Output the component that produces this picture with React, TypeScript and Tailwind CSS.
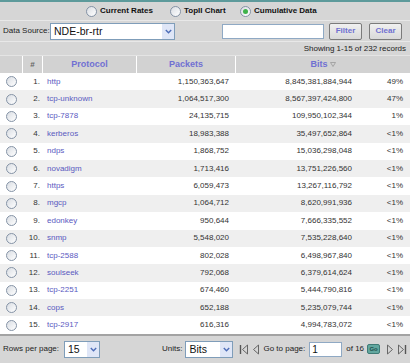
import React from 'react';

const rows = [
  { proto: 'http', packets: '1,150,363,647', bits: '8,845,381,884,944', pct: '49%' },
  { proto: 'tcp-unknown', packets: '1,064,517,300', bits: '8,567,397,424,800', pct: '47%' },
  { proto: 'tcp-7878', packets: '24,135,715', bits: '109,950,102,344', pct: '1%' },
  { proto: 'kerberos', packets: '18,983,388', bits: '35,497,652,864', pct: '<1%' },
  { proto: 'ndps', packets: '1,868,752', bits: '15,036,298,048', pct: '<1%' },
  { proto: 'novadigm', packets: '1,713,416', bits: '13,751,226,560', pct: '<1%' },
  { proto: 'https', packets: '6,059,473', bits: '13,267,116,792', pct: '<1%' },
  { proto: 'mgcp', packets: '1,064,712', bits: '8,620,991,936', pct: '<1%' },
  { proto: 'edonkey', packets: '950,644', bits: '7,666,335,552', pct: '<1%' },
  { proto: 'snmp', packets: '5,548,020', bits: '7,535,228,640', pct: '<1%' },
  { proto: 'tcp-2588', packets: '802,028', bits: '6,498,967,840', pct: '<1%' },
  { proto: 'soulseek', packets: '792,068', bits: '6,379,614,624', pct: '<1%' },
  { proto: 'tcp-2251', packets: '674,460', bits: '5,444,790,816', pct: '<1%' },
  { proto: 'cops', packets: '652,188', bits: '5,235,079,744', pct: '<1%' },
  { proto: 'tcp-2917', packets: '616,316', bits: '4,994,783,072', pct: '<1%' },
];

const Radio = ({ checked = false }: { checked?: boolean }) => (
  <span className="flex items-center justify-center w-[11px] h-[11px] rounded-full border border-[#8593a6] bg-gradient-to-br from-[#d9dde3] to-white shrink-0">
    {checked && <span className="w-[5px] h-[5px] rounded-full bg-[#3fb24a]" />}
  </span>
);

const Chevron = () => (
  <span className="flex items-center justify-center w-[12px] h-full bg-[#dfe6f7]">
    <svg width="7" height="5" viewBox="0 0 7 5">
      <path d="M0.8 1 L3.5 3.7 L6.2 1" fill="none" stroke="#4d6db8" strokeWidth="1.4" />
    </svg>
  </span>
);

const Select = ({ value, className }: { value: string; className: string }) => (
  <div className={`flex items-center h-[17px] bg-white border border-[#7f9db9] shrink-0 ${className}`}>
    <span className="flex-1 pl-[3px] text-[10.5px] text-[#111] leading-none">{value}</span>
    <Chevron />
  </div>
);

const NavIcon = ({ dir, bar }: { dir: 'l' | 'r'; bar?: boolean }) => (
  <svg width="10" height="11" viewBox="0 0 10 11">
    {dir === 'l' ? (
      <>
        {bar && <path d="M1.5 1 V10" stroke="#555" strokeWidth="1.4" />}
        <path d="M8.5 1 L3.5 5.5 L8.5 10 Z" fill="none" stroke="#666" strokeWidth="1" />
      </>
    ) : (
      <>
        <path d="M1.5 1 L6.5 5.5 L1.5 10 Z" fill="none" stroke="#666" strokeWidth="1" />
        {bar && <path d="M8.5 1 V10" stroke="#555" strokeWidth="1.4" />}
      </>
    )}
  </svg>
);

export default function App() {
  return (
    <div className="w-[410px] h-[363px] overflow-hidden bg-[#d6d6d6] font-['Liberation_Sans',Arial,sans-serif] text-[8px] text-[#222]">
      <div className="h-[2px] bg-[#5d9a9b]" />

      {/* view switch */}
      <div className="h-[19px] flex items-center pl-[86px] font-bold text-[8px] text-[#111] border-b border-[#e8e8e8]">
        <div className="flex items-center gap-[3px] w-[84px]">
          <Radio />
          <span>Current Rates</span>
        </div>
        <div className="flex items-center gap-[3px] w-[70px]">
          <Radio />
          <span>TopII Chart</span>
        </div>
        <div className="flex items-center gap-[3px]">
          <Radio checked />
          <span>Cumulative Data</span>
        </div>
      </div>

      {/* data source + filter */}
      <div className="h-[21px] flex items-center pl-[3px] border-b border-[#e8e8e8]">
        <span className="w-[47px]">Data Source:</span>
        <Select value="NDE-br-rtr" className="w-[125px]" />
        <div className="ml-[47px] w-[102px] h-[15px] bg-white border border-[#8fa9c4]" />
        <button className="ml-[5px] w-[33px] h-[17px] rounded-[2px] border border-[#7b7b7b] bg-gradient-to-b from-[#f0f0f0] to-[#d9d9d9] font-bold text-[8px] text-[#6f6fd0]">
          Filter
        </button>
        <button className="ml-[7px] w-[33px] h-[17px] rounded-[2px] border border-[#7b7b7b] bg-gradient-to-b from-[#f0f0f0] to-[#d9d9d9] font-bold text-[8px] text-[#6f6fd0]">
          Clear
        </button>
      </div>

      <div className="h-[13px] flex items-center justify-end pr-[4px] text-[8px] text-[#222]">
        Showing 1-15 of 232 records
      </div>

      {/* header */}
      <div className="h-[18px] grid grid-cols-[22px_20px_94px_99px_1fr] bg-[#d2d2d2] border-t border-[#e4e4e4] font-bold text-[9px] text-[#7070d2]">
        <div />
        <div className="border-l border-white flex items-center justify-center text-[#666] text-[8px]">#</div>
        <div className="border-l border-white flex items-center justify-center">Protocol</div>
        <div className="border-l border-white flex items-center justify-center">Packets</div>
        <div className="border-l border-white flex items-center justify-center gap-[2px]">
          Bits
          <svg width="6" height="5" viewBox="0 0 6 5">
            <path d="M0.5 0.5 H5.5 L3 4.5 Z" fill="none" stroke="#999" strokeWidth="0.8" />
          </svg>
        </div>
      </div>

      {/* rows */}
      {rows.map((r, i) => (
        <div
          key={r.proto}
          className={`h-[17.4px] grid grid-cols-[22px_20px_94px_99px_123px_1fr] items-center text-[8px] ${i % 2 === 0 ? 'bg-white' : 'bg-[#efefef]'}`}
        >
          <div className="flex justify-center pl-[1px]">
            <Radio />
          </div>
          <div className="text-right pr-[2px] text-[#333]">{i + 1}.</div>
          <div className="pl-[5px] text-[#5a5abf]">{r.proto}</div>
          <div className="text-right pr-[6px] text-[#333]">{r.packets}</div>
          <div className="text-right pr-[6px] text-[#333]">{r.bits}</div>
          <div className="text-right pr-[7px] text-[#333]">{r.pct}</div>
        </div>
      ))}

      {/* footer */}
      <div className="h-[27px] border-t-2 border-[#a3a3a3] flex items-center pl-[3px] pt-[2px] whitespace-nowrap">
        <span className="w-[61px]">Rows per page:</span>
        <Select value="15" className="w-[36px]" />
        <span className="ml-[62px]">Units:</span>
        <Select value="Bits" className="ml-[3px] w-[48px]" />
        <div className="ml-[6px] flex items-center gap-[1px]">
          <NavIcon dir="l" bar />
          <NavIcon dir="l" />
        </div>
        <span className="ml-[3px]">Go to page:</span>
        <div className="ml-[4px] w-[33px] h-[15px] bg-white border border-[#8fa9c4] flex items-center pl-[2px] text-[10px] text-[#111] shrink-0">
          1
        </div>
        <span className="ml-[4px]">of 16</span>
        <span className="ml-[3px] w-[13px] h-[10px] rounded-[2px] border border-[#3f7b76] bg-[#62a79f] text-[6px] font-bold text-[#1d4f4a] flex items-center justify-center shrink-0">
          Go
        </span>
        <div className="ml-[6px] flex items-center gap-[1px]">
          <NavIcon dir="r" />
          <NavIcon dir="r" bar />
        </div>
      </div>
    </div>
  );
}
